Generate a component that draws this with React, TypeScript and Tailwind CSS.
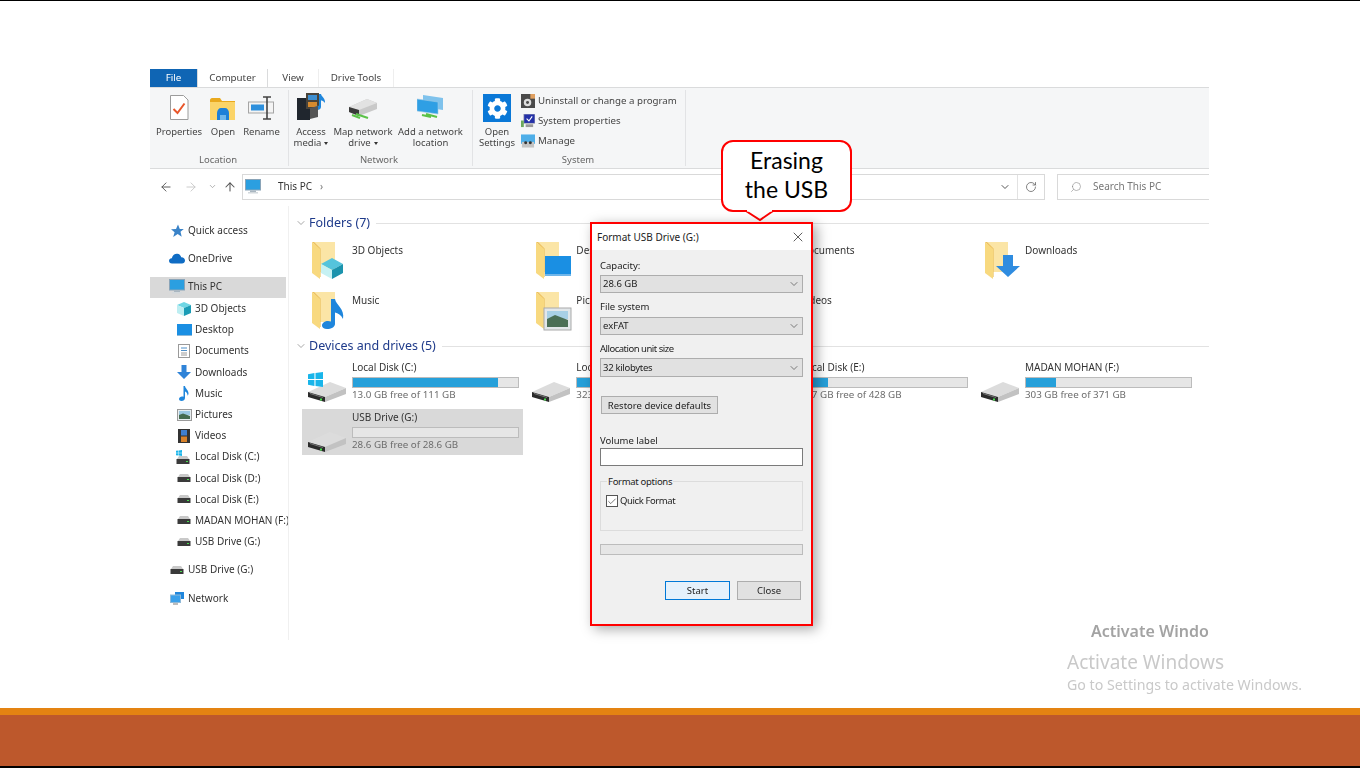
import React from "react";
import { ArrowLeft, ArrowRight, ArrowUp, ChevronDown, Check, RotateCw, Search, X } from "lucide-react";
import { FaCog } from "react-icons/fa";

const uiFont = { fontFamily: "'Noto Sans', sans-serif" };

/* ---------- drawn icons ---------- */
const BigFolder = ({ children }: { children?: React.ReactNode }) => (
  <svg width="38" height="40" viewBox="0 0 38 40">
    <path d="M3 1H24V31H9z" fill="#fbe5a6" />
    <path d="M1 1L9 8V38L1 32z" fill="#f8d97f" />
    <path d="M1 1H3L9.6 7.5V36H9V8z" fill="#ecc05e" />
    {children}
  </svg>
);

const Cube = () => (
  <g>
    <path d="M10 23L21 17L32 23L21 29z" fill="#55c4dc" />
    <path d="M10 23L21 29V38L10 32z" fill="#c6f1f3" />
    <path d="M32 23L21 29V38L32 32z" fill="#1b93ad" />
  </g>
);

const BigDrive = () => (
  <svg width="40" height="24" viewBox="0 0 40 24">
    <path d="M0 14L22 4L38 10L17 19z" fill="#dcdcdc" />
    <path d="M17 19L38 10V16L17 24z" fill="#c2c2c2" />
    <path d="M0 14L17 19V24L0 19z" fill="#2b2b2b" />
    <path d="M2 15L15 19V20L2 16z" fill="#777" />
    <rect x="12" y="20.5" width="2" height="2" fill="#4ade50" />
  </svg>
);

const WinLogo = ({ size = 15 }: { size?: number }) => (
  <svg width={size} height={size} viewBox="0 0 14 14">
    <path d="M0 2L6 1V6.5H0zM7 1L14 0V6.5H7zM0 7.5H6V13L0 12zM7 7.5H14V14L7 13z" fill="#19b5ea" />
  </svg>
);

const SmallDrive = () => (
  <svg width="14" height="8" viewBox="0 0 14 8">
    <path d="M1 3L3 0H11L13 3z" fill="#c9c9c9" />
    <rect x="0.5" y="3" width="13" height="5" fill="#3a3a3a" />
    <rect x="10" y="5" width="2" height="1" fill="#4ade50" />
  </svg>
);

const Monitor = () => (
  <svg width="16" height="15" viewBox="0 0 16 15">
    <rect x="0.5" y="0.5" width="15" height="10.5" fill="#2b9fe0" stroke="#8aa4b8" />
    <rect x="5" y="11.5" width="6" height="1.5" fill="#a9b6c0" />
    <rect x="3" y="13" width="10" height="1.5" fill="#d2d8dc" />
  </svg>
);

const SideIcon = ({ name }: { name: string }) => {
  switch (name) {
    case "star":
      return (
        <svg width="14" height="14" viewBox="0 0 14 14">
          <path d="M8 0.5L9.8 5H13.8L10.5 7.8L11.7 12.8L7.7 10L3.2 13L4.6 8.3L1 5.3L6 5z" fill="#3a83c8" />
        </svg>
      );
    case "cloud":
      return (
        <svg width="16" height="11" viewBox="0 0 16 11">
          <path d="M3 10.5C1 10.5 0 9 0 7.7C0 6 1.6 5 2.8 5.2C3.6 2 6 0.5 8.3 0.8C10.5 1 11.8 2.6 12.2 4.3C14.5 4.2 16 5.8 16 7.6C16 9.4 14.6 10.5 13 10.5z" fill="#0f6cc4" />
        </svg>
      );
    case "pc":
      return <Monitor />;
    case "cube":
      return (
        <svg width="14" height="14" viewBox="0 0 14 14">
          <path d="M0 3L7 0L14 3L7 6z" fill="#6fd6e4" />
          <path d="M0 3L7 6V14L0 11z" fill="#bdeef2" />
          <path d="M14 3L7 6V14L14 11z" fill="#1a9cb6" />
        </svg>
      );
    case "desktop":
      return (
        <svg width="15" height="12" viewBox="0 0 15 12">
          <rect width="15" height="11" fill="#1a8fe3" />
          <rect y="11" width="15" height="1" fill="#8fb9d8" />
        </svg>
      );
    case "docs":
      return (
        <svg width="12" height="14" viewBox="0 0 12 14">
          <rect x="0.5" y="0.5" width="11" height="13" fill="#fff" stroke="#9a9a9a" />
          <path d="M3 4H9M3 6.5H9" stroke="#4d8fc9" />
          <path d="M3 9H9M3 11H9" stroke="#9a9a9a" />
        </svg>
      );
    case "down":
      return (
        <svg width="14" height="14" viewBox="0 0 14 14">
          <path d="M4.5 0H9.5V7H14L7 14L0 7H4.5z" fill="#2f83d8" />
        </svg>
      );
    case "music":
      return (
        <svg width="10" height="15" viewBox="0 0 10 15">
          <path d="M4.5 0H6C6.3 2.5 9.5 4 9.5 7.5C9.5 8.5 9 9.3 8.5 9.8C8.8 7.5 7.3 6 6 5.5V12C6 13.7 4.3 15 2.5 15C1 15 0 14.2 0 13C0 11.5 1.6 10.5 3 10.5C3.6 10.5 4.1 10.6 4.5 10.8z" fill="#1f86dc" />
        </svg>
      );
    case "pictures":
      return (
        <svg width="15" height="12" viewBox="0 0 15 12">
          <rect x="0.5" y="0.5" width="14" height="11" fill="#e8eef0" stroke="#9a9a9a" />
          <rect x="2" y="2" width="11" height="4" fill="#9cc8e0" />
          <path d="M2 6L6 4.5L13 7V10H2z" fill="#456b4e" />
        </svg>
      );
    case "videos":
      return (
        <svg width="12" height="14" viewBox="0 0 12 14">
          <rect width="12" height="14" fill="#333" />
          <rect x="3" y="1" width="6" height="5.5" fill="#3f7fd0" />
          <rect x="3" y="7.5" width="6" height="5.5" fill="#d9822b" />
        </svg>
      );
    case "winDrive":
      return (
        <span className="relative flex h-[14px] w-[16px] items-end">
          <span className="absolute left-0 top-0">
            <WinLogo size={6} />
          </span>
          <SmallDrive />
        </span>
      );
    case "network":
      return (
        <svg width="15" height="15" viewBox="0 0 15 15">
          <rect x="5" y="1" width="9" height="7" fill="#1f86dc" />
          <rect x="0.5" y="4" width="10" height="7.5" fill="#3aa0ea" stroke="#8fb9d8" />
          <rect x="3" y="12" width="5" height="2" fill="#bdbdbd" />
        </svg>
      );
    default:
      return <SmallDrive />;
  }
};

const RibbonIcon = ({ name }: { name: string }) => {
  switch (name) {
    case "properties":
      return (
        <svg width="20" height="25" viewBox="0 0 20 25">
          <path d="M1.5 0.5H14.5L19 5V24.5H1.5z" fill="#fff" stroke="#9c9c9c" />
          <path d="M4.5 14L8.5 18L15.5 8.5" fill="none" stroke="#e8562a" strokeWidth="2" />
        </svg>
      );
    case "open":
      return (
        <svg width="26" height="22" viewBox="0 0 26 22">
          <path d="M0 2C0 1 1 0 2 0H10L12 3H25V22H0z" fill="#e9a91e" />
          <rect y="4" width="25" height="18" fill="#fbd468" />
          <path d="M7 15C7 12 9 10 11 10H15C17 10 19 12 19 15V22H7z" fill="#1d80d8" />
          <rect x="10" y="17" width="6" height="5" fill="#6fb6ea" />
        </svg>
      );
    case "rename":
      return (
        <svg width="27" height="24" viewBox="0 0 27 24">
          <rect x="0.5" y="6" width="25" height="11" fill="#f4f4f4" stroke="#a5a5a5" />
          <rect x="3" y="8.5" width="13" height="6" fill="#2d8fdc" />
          <path d="M15 1H23M19 1V23M15 23H23" fill="none" stroke="#444" strokeWidth="1.6" />
        </svg>
      );
    case "media":
      return (
        <svg width="29" height="28" viewBox="0 0 29 28">
          <rect x="0" y="6" width="13" height="22" fill="#20262e" />
          <rect x="9" y="1" width="13" height="16" fill="#49433a" />
          <rect x="11" y="3" width="9" height="5" fill="#3d8ed0" />
          <rect x="11" y="10" width="9" height="5" fill="#d68a2f" />
          <path d="M22 2H24C24.5 5 28.5 6 28 11C26.5 9 25 8.5 24 8.5V15C24 16.8 22 18 20.5 18C19 18 18 17 18 16C18 14.5 20 13.2 22 13.8z" fill="#1f86dc" />
          <path d="M13 16L21 14V25L13 27z" fill="#555" />
        </svg>
      );
    case "mapDrive":
      return (
        <svg width="30" height="22" viewBox="0 0 30 22">
          <path d="M1 9L19 1L29 5V11L11 18L1 14z" fill="#c9c9c9" />
          <path d="M1 9L19 1L29 5L11 12z" fill="#e2e2e2" />
          <path d="M1 9L11 12V18L1 14z" fill="#3a3a3a" />
          <path d="M4 17L12 20M8 16L20 20" stroke="#5bc248" strokeWidth="2" />
        </svg>
      );
    case "addNet":
      return (
        <svg width="27" height="25" viewBox="0 0 27 25">
          <path d="M6 0L26 3V15L6 12z" fill="#7fc2ec" />
          <path d="M0 4L21 7V19L0 16z" fill="#2f9fe4" stroke="#9ccbe6" strokeWidth="0.6" />
          <path d="M5 20L14 22M9 19L20 22" stroke="#5bc248" strokeWidth="2" />
        </svg>
      );
    case "uninstall":
      return (
        <svg width="14" height="14" viewBox="0 0 15 15">
          <rect width="15" height="15" fill="#4a4a4a" />
          <circle cx="7" cy="9" r="4" fill="#ddd" />
          <circle cx="7" cy="9" r="1.6" fill="#4a4a4a" />
          <rect x="10" y="0" width="5" height="5" fill="#e0a060" />
        </svg>
      );
    case "sysProps":
      return (
        <svg width="14" height="14" viewBox="0 0 15 15">
          <rect x="3" y="0" width="12" height="10" fill="#2431a8" stroke="#bbb" strokeWidth="0.8" />
          <path d="M6 5L8.5 7.5L12 2.5" fill="none" stroke="#fff" strokeWidth="1.2" />
          <rect x="0" y="7" width="3" height="7" fill="#6ba85c" />
          <rect x="5" y="11" width="8" height="3" fill="#999" />
        </svg>
      );
    default:
      return (
        <svg width="14" height="14" viewBox="0 0 15 14">
          <rect width="15" height="10" fill="#4eaee8" />
          <rect x="1" y="8" width="13" height="6" fill="#c4c4c4" />
          <circle cx="5" cy="9" r="1.6" fill="#333" />
          <circle cx="10" cy="9" r="1.6" fill="#333" />
        </svg>
      );
  }
};

const Caret = () => <span className="ml-[3px] inline-block h-0 w-0 border-x-[2.5px] border-t-[3px] border-x-transparent border-t-[#333] align-middle" />;

/* ---------- data ---------- */
const sideRows = [
  ["cube", "3D Objects"],
  ["desktop", "Desktop"],
  ["docs", "Documents"],
  ["down", "Downloads"],
  ["music", "Music"],
  ["pictures", "Pictures"],
  ["videos", "Videos"],
  ["winDrive", "Local Disk (C:)"],
  ["drive", "Local Disk (D:)"],
  ["drive", "Local Disk (E:)"],
  ["drive", "MADAN MOHAN (F:)"],
  ["drive", "USB Drive (G:)"],
];

const folders: [string, React.ReactNode][] = [
  ["3D Objects", <Cube key="c" />],
  ["Desktop", (
    <g key="d">
      <rect x="10" y="15" width="26" height="20" fill="#1a8fe3" />
      <rect x="10" y="33" width="26" height="2" fill="#6fb6ea" />
    </g>
  )],
  ["Documents", <rect key="t" x="12" y="16" width="20" height="22" fill="#fff" stroke="#999" />],
  ["Downloads", <path key="a" d="M19 14H29V25H36L24 36L12 25H19z" fill="#2f8ce0" />],
  ["Music", <path key="m" d="M20 8H24C25 14 34 18 32 28C30 24 27 22 24 21.5V33C24 36 20 38 16 38C13 38 11 36.5 11 34.5C11 32 14 30 17 30C18 30 19 30.2 20 30.6z" fill="#1f86dc" />],
  ["Pictures", (
    <g key="p">
      <rect x="9" y="17" width="27" height="22" fill="#e2e7ea" stroke="#aaa" />
      <rect x="12" y="20" width="21" height="8" fill="#a8d0e6" />
      <path d="M12 28L20 24L33 29V36H12z" fill="#4a6f56" />
    </g>
  )],
  ["Videos", <rect key="v" x="12" y="16" width="20" height="22" fill="#333" />],
];

const drives = [
  { name: "Local Disk (C:)", free: "13.0 GB free of 111 GB", used: 88, win: true },
  { name: "Local Disk (D:)", free: "323 GB free of 465 GB", used: 30, win: false },
  { name: "Local Disk (E:)", free: "357 GB free of 428 GB", used: 16, win: false },
  { name: "MADAN MOHAN (F:)", free: "303 GB free of 371 GB", used: 18, win: false },
  { name: "USB Drive (G:)", free: "28.6 GB free of 28.6 GB", used: 0, win: false, selected: true },
];

/* ---------- explorer pieces ---------- */
const RibbonButton = ({ icon, lines, caret, width }: { icon: string; lines: string[]; caret?: boolean; width: string }) => (
  <div className={`flex flex-col items-center ${width}`}>
    <div className="flex h-[33px] items-end pb-[3px]">
      {icon === "settings" ? (
        <span className="-mb-[2px] flex h-[28px] w-[28px] items-center justify-center bg-[#0a78d7]">
          <FaCog className="text-white" size={21} />
        </span>
      ) : (
        <RibbonIcon name={icon} />
      )}
    </div>
    <div className="mt-[3px] text-center text-[9.5px] leading-[11px] whitespace-nowrap text-[#444]">
      {lines.map((l, i) => (
        <div key={l}>
          {l}
          {caret && i === lines.length - 1 && <Caret />}
        </div>
      ))}
    </div>
  </div>
);

const RibbonGroup = ({ label, width, labelPad, children }: { label: string; width: string; labelPad: string; children: React.ReactNode }) => (
  <div className={`flex h-[76px] flex-col border-r border-[#e2e3e5] ${width}`}>
    <div className="flex flex-1">{children}</div>
    <div className={`text-center text-[9.5px] leading-[12px] text-[#666] ${labelPad}`}>{label}</div>
  </div>
);

const Ribbon = () => (
  <div className="flex h-[82px] border-y border-[#dadbdc] bg-[#f5f6f7] pt-[2px]">
    <RibbonGroup label="Location" width="w-[139px]" labelPad="pr-[2px]">
      <RibbonButton icon="properties" lines={["Properties"]} width="w-[58px]" />
      <RibbonButton icon="open" lines={["Open"]} width="w-[30px]" />
      <RibbonButton icon="rename" lines={["Rename"]} width="w-[47px]" />
    </RibbonGroup>
    <RibbonGroup label="Network" width="w-[184px]" labelPad="pr-[3px]">
      <RibbonButton icon="media" lines={["Access", "media"]} caret width="w-[44px]" />
      <RibbonButton icon="mapDrive" lines={["Map network", "drive"]} caret width="w-[60px]" />
      <RibbonButton icon="addNet" lines={["Add a network", "location"]} width="w-[75px]" />
    </RibbonGroup>
    <RibbonGroup label="System" width="w-[213px]" labelPad="pr-[2px]">
      <RibbonButton icon="settings" lines={["Open", "Settings"]} width="w-[48px]" />
      <div className="flex flex-col gap-[4px] pt-[3px]">
        {[
          ["uninstall", "Uninstall or change a program"],
          ["sysProps", "System properties"],
          ["manage", "Manage"],
        ].map(([icon, label]) => (
          <div key={label} className="flex h-[16px] items-center gap-[3px] text-[9.7px] whitespace-nowrap text-[#444]">
            <RibbonIcon name={icon} />
            {label}
          </div>
        ))}
      </div>
    </RibbonGroup>
  </div>
);

const AddressBar = () => (
  <div className="flex h-[37px] items-center pb-[2px] pl-[9px] text-[#555]">
    <ArrowLeft size={14} strokeWidth={1.6} className="shrink-0" />
    <ArrowRight size={14} strokeWidth={1.6} className="ml-[11px] shrink-0 text-[#c8c8c8]" />
    <ChevronDown size={9} strokeWidth={2} className="ml-[10px] shrink-0 text-[#999]" />
    <ArrowUp size={14} strokeWidth={1.8} className="ml-[6px] shrink-0" />
    <div className="ml-[5px] flex h-[26px] w-[803px] shrink-0 items-center border border-[#d9d9d9] pl-[2px] text-[10px] text-[#333]">
      <Monitor />
      <span className="ml-[17px]">This PC</span>
      <span className="ml-[8px] text-[#777]">›</span>
      <div className="ml-auto flex h-full items-center">
        <ChevronDown size={12} strokeWidth={2} className="mr-[6px] text-[#555]" />
        <div className="flex h-full w-[27px] items-center justify-center border-l border-[#e2e2e2]">
          <RotateCw size={12} strokeWidth={1.6} className="text-[#666]" />
        </div>
      </div>
    </div>
    <div className="ml-[12px] flex h-[26px] w-[170px] shrink-0 items-center border border-[#d9d9d9] pl-[12px] text-[10px] text-[#777]">
      <Search size={12} strokeWidth={1.2} className="-scale-x-100 text-[#888]" />
      <span className="ml-[11px]">Search This PC</span>
    </div>
  </div>
);

const SideRow = ({ icon, label, selected, child }: { icon: string; label: string; selected?: boolean; child?: boolean }) => (
  <div className={`flex items-center whitespace-nowrap text-[10px] text-[#333] ${child ? "h-[21.2px] pl-[26px]" : "h-[21px] pb-[2px] pl-[19px]"} ${selected ? "mr-[2px] bg-[#d9d9d9]" : ""}`}>
    <span className="flex w-[19px] shrink-0 justify-center pr-[3px]">
      <SideIcon name={icon} />
    </span>
    {label}
  </div>
);

const Sidebar = () => (
  <div className="flex w-[139px] flex-col overflow-hidden border-r border-[#f0f0f0] pt-[15px]">
    <SideRow icon="star" label="Quick access" />
    <div className="mt-[7px]">
      <SideRow icon="cloud" label="OneDrive" />
    </div>
    <div className="mt-[7px]">
      <SideRow icon="pc" label="This PC" selected />
    </div>
    {sideRows.map(([icon, label]) => (
      <SideRow key={label} icon={icon} label={label} child />
    ))}
    <div className="mt-[8px]">
      <SideRow icon="drive" label="USB Drive (G:)" />
    </div>
    <div className="mt-[8px]">
      <SideRow icon="network" label="Network" />
    </div>
  </div>
);

const SectionHeader = ({ label }: { label: string }) => (
  <div className="flex h-[20px] items-center pl-[6px]">
    <ChevronDown size={12} strokeWidth={1.3} className="text-[#777]" />
    <span className="ml-[2px] text-[12.5px] text-[#1e3a8a]">{label}</span>
    <span className="ml-[6px] h-px flex-1 bg-[#e2e2e2]" />
  </div>
);

const Content = () => (
  <div className="flex-1 pt-[7px]">
    <SectionHeader label="Folders (7)" />
    <div className="mt-[8px] grid h-[95px] grid-cols-[repeat(4,221px)] grid-rows-[45px_45px] content-start gap-x-[3.33px] gap-y-[5px] pl-[13px]">
      {folders.map(([name, art]) => (
        <div key={name} className="flex">
          <span className="w-[50px] pl-[9px]">
            <BigFolder>{art}</BigFolder>
          </span>
          <span className="pt-[2px] text-[10px] leading-[14px] text-[#333]">{name}</span>
        </div>
      ))}
    </div>
    <SectionHeader label="Devices and drives (5)" />
    <div className="mt-[3px] grid grid-cols-[repeat(4,221px)] grid-rows-[46px_46px] gap-x-[3.33px] gap-y-[4px] pl-[13px]">
      {drives.map((d) => (
        <div key={d.name} className={`flex ${d.selected ? "bg-[#d9d9d9]" : ""}`}>
          <span className="relative flex w-[50px] items-end justify-center pb-[3px] pl-[2px]">
            {d.win && (
              <span className="absolute left-[6px] top-[13px]">
                <WinLogo />
              </span>
            )}
            <BigDrive />
          </span>
          <div className="w-[167px] pt-[1px]">
            <div className="text-[10px] leading-[14px] text-[#333]">{d.name}</div>
            <div className="mt-[3px] h-[11px] border border-[#bcbcbc] bg-[#e6e6e6]">
              <div className="h-full bg-[#26a0da]" style={{ width: `${d.used}%` }} />
            </div>
            <div className="text-[9.8px] leading-[14px] text-[#6d6d6d]">{d.free}</div>
          </div>
        </div>
      ))}
    </div>
  </div>
);

const Explorer = () => (
  <div className="relative h-[571px] w-[1059px] overflow-hidden blur-[0.3px]" style={uiFont}>
    <div className="flex h-[18px] items-stretch text-[9.8px] leading-[18px] text-[#444]">
      <div className="w-[47px] bg-[#0f65b4] text-center text-white">File</div>
      <div className="w-[71px] border-x border-[#dadbdc] text-center">Computer</div>
      <div className="w-[51px] border-r border-[#eeeeee] text-center">View</div>
      <div className="w-[75px] border-r border-[#eeeeee] text-center">Drive Tools</div>
    </div>
    <Ribbon />
    <AddressBar />
    <div className="flex h-[434px]">
      <Sidebar />
      <Content />
    </div>
    <div className="absolute left-[941px] top-[552px] text-[16px] leading-5 font-semibold whitespace-nowrap text-[#a3a3a3]">
      Activate Windo
    </div>
  </div>
);

/* ---------- format dialog ---------- */
const DlgLabel = ({ children, className = "" }: { children: React.ReactNode; className?: string }) => (
  <div className={`h-[14px] pt-px text-[9.5px] leading-[14px] text-[#222] ${className}`}>{children}</div>
);

const DlgSelect = ({ value, className = "" }: { value: string; className?: string }) => (
  <div className={`flex items-center justify-between border border-[#adadad] bg-[#e1e1e1] pr-[2px] pl-[2px] text-[9.5px] text-[#222] ${className}`}>
    <span className="pt-px">{value}</span>
    <ChevronDown size={12} strokeWidth={1.5} className="text-[#555]" />
  </div>
);

const FormatDialog = () => (
  <div className="absolute left-[590px] top-[221px] flex h-[404px] w-[223px] flex-col border-2 border-[#ff0000] bg-[#f0f0f0] shadow-[4px_3px_12px_rgba(0,0,0,0.35)] blur-[0.2px]" style={uiFont}>
    <div className="flex h-[26px] items-center justify-between bg-white pr-[5px] pl-[5px] text-[10px] text-[#222]">
      Format USB Drive (G:)
      <X size={16} strokeWidth={1.2} className="text-[#333]" />
    </div>
    <div className="flex flex-col pr-[8px] pl-[8px]">
      <DlgLabel className="mt-[8px]">Capacity:</DlgLabel>
      <DlgSelect value="28.6 GB" className="mt-[3px] h-[18px]" />
      <DlgLabel className="mt-[6px]">File system</DlgLabel>
      <DlgSelect value="exFAT" className="mt-[4px] h-[18px]" />
      <DlgLabel className="mt-[6px] tracking-[-0.5px]">Allocation unit size</DlgLabel>
      <DlgSelect value="32 kilobytes" className="mt-[3px] h-[19px] tracking-[-0.3px]" />
      <div className="mt-[19px] ml-[1px] flex h-[18px] w-[117px] items-center justify-center border border-[#adadad] bg-[#e1e1e1] pt-[2px] text-[9.5px] text-[#222]">
        Restore device defaults
      </div>
      <DlgLabel className="mt-[19px]">Volume label</DlgLabel>
      <div className="mt-[1px] h-[18px] border border-[#7a7a7a] bg-white" />
      <div className="relative mt-[15px] h-[50px] border border-[#dcdcdc]">
        <span className="absolute left-[6px] top-[-7px] bg-[#f0f0f0] px-px text-[9.5px] leading-[14px] tracking-[-0.3px] text-[#222]">Format options</span>
        <div className="mt-[13px] ml-[5px] flex items-center text-[9.5px] leading-[12px] tracking-[-0.4px] text-[#222]">
          <span className="flex h-[12px] w-[12px] items-center justify-center border border-[#555] bg-white">
            <Check size={11} strokeWidth={1.6} className="text-[#333]" />
          </span>
          <span className="ml-[2px]">Quick Format</span>
        </div>
      </div>
      <div className="mt-[13px] h-[11px] border border-[#bcbcbc] bg-[#e6e6e6]" />
      <div className="mt-[26px] flex justify-end gap-[7px] pr-[2px] text-[9.5px] text-[#222]">
        <div className="flex h-[19px] w-[65px] items-center justify-center border border-[#0078d7] bg-[#e5f1fb] pt-[2px]">Start</div>
        <div className="flex h-[19px] w-[64px] items-center justify-center border border-[#adadad] bg-[#e1e1e1] pt-[2px]">Close</div>
      </div>
    </div>
  </div>
);

const Callout = () => (
  <div className="absolute left-[721px] top-[139px] flex h-[72px] w-[131px] flex-col items-center justify-center rounded-[12px] border-2 border-[#ff0000] bg-white pb-[2px] text-[23px] leading-[29px] text-black" style={{ fontFamily: "Lato, sans-serif" }}>
    <span>Erasing</span>
    <span>the USB</span>
    <svg className="absolute left-[22px] top-[67px]" width="30" height="13" viewBox="0 0 30 13">
      <path d="M1 2L15 11L28 2" fill="#fff" stroke="#ff0000" strokeWidth="2" />
      <rect x="2" y="0" width="25" height="2.6" fill="#fff" />
    </svg>
  </div>
);

export default function App() {
  return (
    <div className="relative flex h-[768px] w-[1360px] flex-col overflow-hidden border-t border-black bg-white">
      <div className="flex-1 pt-[68px] pl-[150px]">
        <Explorer />
      </div>
      <div className="h-[7px] bg-[#e48312]" />
      <div className="h-[51px] bg-[#bd582c]" />
      <div className="h-[2px] bg-black" />
      <Callout />
      <FormatDialog />
      <div className="absolute left-[1067px] top-[649px] text-[#c9c9c9] blur-[0.2px]" style={uiFont}>
        <div className="text-[19px] leading-[24px]">Activate Windows</div>
        <div className="text-[14.2px] leading-[22px]">Go to Settings to activate Windows.</div>
      </div>
    </div>
  );
}
